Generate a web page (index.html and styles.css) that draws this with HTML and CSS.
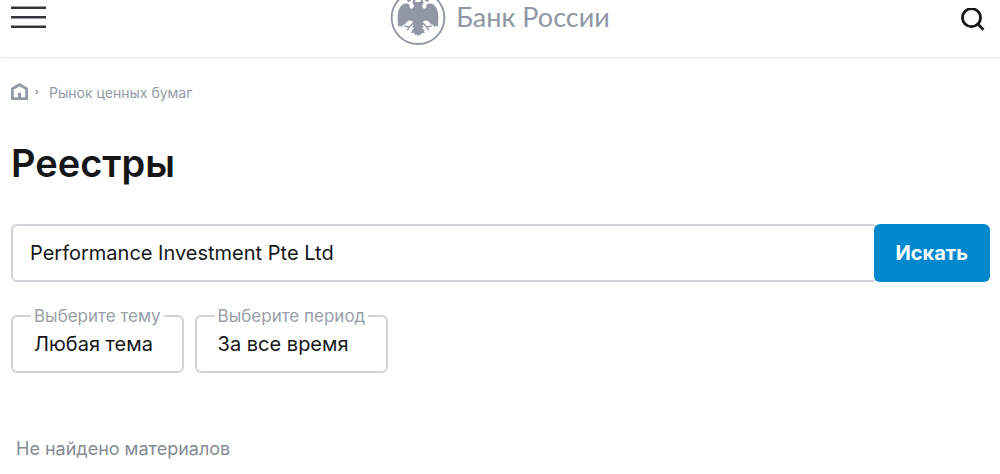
FILE: index.html
```html
<!DOCTYPE html>
<html lang="ru">
<head>
<meta charset="utf-8">
<meta name="viewport" content="width=device-width, initial-scale=1">
<title>Реестры | Банк России</title>
<link rel="stylesheet" href="styles.css">
</head>
<body>
<header class="header">
  <button class="icon-button menu" type="button" aria-label="Меню">
    <svg width="35" height="24" viewBox="0 0 35 24" fill="none" stroke="#35373d" stroke-width="2.6"><path d="M0 2.8h35M0 12.3h35M0 21.8h35"/></svg>
  </button>
  <a class="logo" href="#">
    <svg width="56" height="46" viewBox="33 0 168 138" fill="#9096a4" aria-hidden="true">
      <circle cx="117" cy="53" r="79" fill="none" stroke="#9096a4" stroke-width="5.5"/>
      <path d="M105 0C99 2 99 10 104 14C106 19 103 25 98 26C92 26 90 21 92 15C84 8 72 10 66 18C59 26 56 39 56 50L57 80L64 77L67 81L73 74L79 73C82 66 88 60 94 62C101 61 104 67 98 71L104 76L99 81L106 84L99 90L97 100L105 98L109 106L113 103L117 110L121 103L125 106L129 98L137 100L135 90L128 84L135 81L130 76L136 71C130 67 133 61 140 62C146 60 152 66 155 73L161 74L167 81L170 77L177 80L178 50C178 39 175 26 168 18C162 10 150 8 142 15C144 21 142 26 136 26C131 25 128 19 130 14C135 10 135 2 129 0H125V6H109V0Z"/>
      <path d="M84 0C84 4 88 7 95 3L97 0ZM150 0C150 4 146 7 139 3L137 0Z"/>
      <path d="M100 72L91 81L76 78M91 80L85 91M134 72L143 81L158 78M143 80L149 91" fill="none" stroke="#9096a4" stroke-width="4"/>
    </svg>
    <span class="logo-text">Банк России</span>
  </a>
  <button class="icon-button search-toggle" type="button" aria-label="Поиск">
    <svg width="24" height="24" viewBox="0 0 24 24" fill="none" stroke="#141618" stroke-width="2.8"><circle cx="10.5" cy="9.7" r="9"/><path d="M16.8 16L22.5 21.8"/></svg>
  </button>
</header>
<main class="content">
  <nav class="breadcrumbs" aria-label="Навигация">
    <a class="home" href="#" aria-label="Главная">
      <svg width="17" height="18" viewBox="0 0 17 18" fill="none" stroke="#929aa7" stroke-width="2.8"><path d="M1.4 15.6V5.8L8.5 1.7L15.6 5.8V15.6Z"/><path d="M8.5 9.8V15" stroke-width="3"/></svg>
    </a>
    <svg class="chevron" width="4" height="6" viewBox="0 0 4 6" fill="none" stroke="#929aa7" stroke-width="1.2"><path d="M.6 1L2.8 3L.6 5"/></svg>
    <a class="crumb" href="#">Рынок ценных бумаг</a>
  </nav>
  <h1 class="title">Реестры</h1>
  <form class="form">
    <div class="search">
      <input class="search-input" type="text" aria-label="Поиск по реестрам" value="Performance Investment Pte Ltd">
      <button class="search-submit" type="button">Искать</button>
    </div>
    <div class="filters">
      <fieldset class="filter">
        <legend class="filter-legend"><label for="topic">Выберите тему</label></legend>
        <select class="filter-select" id="topic"><option>Любая тема</option></select>
      </fieldset>
      <fieldset class="filter">
        <legend class="filter-legend"><label for="period">Выберите период</label></legend>
        <select class="filter-select" id="period"><option>За все время</option></select>
      </fieldset>
    </div>
  </form>
  <p class="empty">Не найдено материалов</p>
</main>
</body>
</html>
```
FILE: styles.css
```css
* {
  box-sizing: border-box;
}

body {
  margin: 0;
  background: #fff;
  color: #141618;
  font-family: Inter, "Noto Sans", sans-serif;
  font-size: 20px;
}

button,
input,
select {
  font: inherit;
  color: inherit;
}

.header {
  display: grid;
  grid-template-columns: 1fr auto 1fr;
  align-items: start;
  margin-left: 2px;
  padding: 0 15px 11px 9px;
  border-bottom: 1px solid #e3e4e6;
}

.icon-button {
  display: flex;
  padding: 0;
  border: 0;
  background: none;
}

.menu {
  margin-top: 5px;
  justify-self: start;
}

.search-toggle {
  margin-top: 8px;
  justify-self: end;
}

.logo {
  display: flex;
  gap: 10px;
  margin-left: 4px;
  color: #9096a4;
  text-decoration: none;
}

.logo-text {
  font-family: Lato, sans-serif;
  font-size: 27px;
  line-height: 34px;
}

.content {
  padding: 24px 10px 12px 11px;
}

.breadcrumbs {
  display: flex;
  align-items: center;
  height: 20px;
  color: #929aa7;
  font-size: 14px;
}

.home {
  display: flex;
}

.chevron {
  margin: 0 10px 0 7px;
}

.crumb {
  color: inherit;
  text-decoration: none;
}

.title {
  margin: 36px 0;
  font-size: 38px;
  font-weight: 600;
  line-height: 50px;
}

.search {
  display: flex;
}

.search-input {
  flex: 1;
  min-width: 0;
  height: 58px;
  margin-right: -4px;
  padding: 0 17px;
  border: 2px solid #d0d3d7;
  border-radius: 6px;
  background: #fff;
}

.search-submit {
  position: relative;
  padding: 0 22px;
  border: 0;
  border-radius: 6px;
  background: #0088cf;
  color: #fff;
  font-weight: 700;
}

.filters {
  display: flex;
  flex-wrap: wrap;
  gap: 11px;
  margin-top: 24px;
}

.filter {
  margin: 0;
  padding: 0 18px 9px;
  border: 2px solid #d0d3d7;
  border-radius: 6px;
}

.filter-legend {
  padding: 0 3px;
  color: #989faa;
  font-size: 17px;
  line-height: 20px;
}

.filter-select {
  display: block;
  height: 36px;
  padding: 0 3px;
  border: 0;
  background: none;
  appearance: none;
}

.empty {
  margin: 64px 5px 0;
  color: #858b94;
  font-size: 18px;
  line-height: 24px;
}
```
